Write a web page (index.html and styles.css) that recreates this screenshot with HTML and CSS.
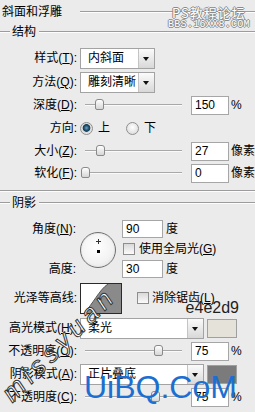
FILE: index.html
```html
<!DOCTYPE html>
<html lang="zh">
<head>
  <meta charset="UTF-8">
  <title>斜面和浮雕</title>
  <link rel="stylesheet" href="styles.css">
</head>
<body>
  <div class="panel">
    <div class="title"><span>斜面和浮雕</span><i class="rule"></i></div>
    <div class="legend"><i class="rule short"></i><span>结构</span><i class="rule"></i></div>

    <div class="row sel-row">
      <label class="lbl">样式(<u>T</u>):</label>
      <div class="select w75"><span>内斜面</span><b class="btn"></b></div>
    </div>
    <div class="row sel-row">
      <label class="lbl">方法(<u>Q</u>):</label>
      <div class="select w75"><span>雕刻清晰</span><b class="btn"></b></div>
    </div>
    <div class="row slide-row">
      <label class="lbl">深度(<u>D</u>):</label>
      <div class="slider"><div class="track"><i class="thumb" style="left:14.5%"></i></div></div>
      <div class="num">150</div><span class="unit">%</span>
    </div>
    <div class="row dir-row">
      <label class="lbl">方向:</label>
      <span class="radio on"></span><span class="opt">上</span>
      <span class="radio gap"></span><span class="opt">下</span>
    </div>
    <div class="row slide-row">
      <label class="lbl">大小(<u>Z</u>):</label>
      <div class="slider"><div class="track"><i class="thumb" style="left:15.5%"></i></div></div>
      <div class="num">27</div><span class="unit">像素</span>
    </div>
    <div class="row slide-row">
      <label class="lbl">软化(<u>F</u>):</label>
      <div class="slider"><div class="track"><i class="thumb" style="left:0%"></i></div></div>
      <div class="num">0</div><span class="unit">像素</span>
    </div>

    <i class="rule sep"></i>
    <div class="legend shadow"><i class="rule short"></i><span>阴影</span><i class="rule"></i></div>

    <div class="angle">
      <label class="lbl a-lbl">角度(<u>N</u>):</label>
      <div class="dial"><i class="cross"></i><i class="dot"></i></div>
      <div class="cell"><div class="num wide">90</div><span class="unit">度</span></div>
      <div class="cell chk-cell"><span class="check"></span><span class="opt">使用全局光(<u>G</u>)</span></div>
      <label class="lbl h-lbl">高度:</label>
      <div class="cell"><div class="num wide">30</div><span class="unit">度</span></div>
    </div>

    <div class="row contour-row">
      <label class="lbl">光泽等高线:</label>
      <div class="contour">
        <svg width="40" height="29" viewBox="0 0 40 29">
          <path d="M3 29 C 12 20, 18 6, 27 0 L 40 0 L 40 29 Z" fill="#8a8a8a"/>
          <path d="M3 29 C 12 20, 18 6, 27 0" fill="none" stroke="#555" stroke-width="1"/>
        </svg>
      </div>
      <span class="check aa"></span><span class="opt">消除锯齿(<u>L</u>)</span>
      <span class="hex">e4e2d9</span>
    </div>
    <div class="row sel-row">
      <label class="lbl">高光模式(<u>H</u>):</label>
      <div class="select w124"><span>柔光</span><b class="btn"></b></div>
      <div class="swatch light"></div>
    </div>
    <div class="row slide-row">
      <label class="lbl">不透明度(<u>O</u>):</label>
      <div class="slider"><div class="track"><i class="thumb" style="left:75%"></i></div></div>
      <div class="num">75</div><span class="unit">%</span>
    </div>
    <div class="row sel-row">
      <label class="lbl">阴影模式(<u>A</u>):</label>
      <div class="select w124"><span>正片叠底</span><b class="btn"></b></div>
      <div class="swatch dark"></div>
    </div>
    <div class="row slide-row">
      <label class="lbl">不透明度(<u>C</u>):</label>
      <div class="slider"><div class="track"><i class="thumb" style="left:72%"></i></div></div>
      <div class="num">75</div><span class="unit">%</span>
    </div>
  </div>

  <div class="wm-ps"><span class="cn">PS教程论坛</span><span class="en">BBS.16XX8.COM</span></div>
  <div class="wm-miss">missyuan</div>
  <div class="wm-uibq">UiBQ.CoM</div>
</body>
</html>
```

FILE: styles.css
```css
body {
  margin: 0;
  width: 255px;
  height: 412px;
  overflow: hidden;
  position: relative;
  background: #ebebeb;
  color: #000;
  font-family: "Liberation Sans", "Noto Sans CJK SC", sans-serif;
  font-size: 12px;
  line-height: 1;
}
u {
  text-decoration: underline;
  text-underline-offset: 1px;
}
.rule {
  display: block;
  flex: 1;
  height: 0;
  border-top: 1px solid #9c9c9c;
  border-bottom: 1px solid #fdfdfd;
}
.rule.short {
  flex: none;
  width: 10px;
}
.title {
  display: flex;
  align-items: center;
  height: 24px;
  padding-left: 2px;
}
.title .rule {
  margin-left: 18px;
}
.legend {
  display: flex;
  align-items: center;
  height: 16px;
  margin-bottom: 6px;
}
.legend span {
  padding: 0 3px 0 2px;
}
.legend.shadow {
  height: 22px;
  margin-bottom: 4px;
}
.sep {
  margin-top: 6px;
}

.row {
  display: flex;
  align-items: center;
  white-space: nowrap;
}
.sel-row { height: 24px; }
.slide-row { height: 22px; }
.dir-row { height: 24px; }
.contour-row {
  position: relative;
  height: 36px;
}

.lbl {
  width: 77px;
  flex: none;
  text-align: right;
  margin-right: 3px;
  white-space: nowrap;
}

.select {
  display: flex;
  flex: none;
  height: 21px;
  box-sizing: border-box;
  border: 1px solid #a3a3a3;
  background: #fff;
}
.select span {
  flex: 1;
  padding-left: 7px;
  line-height: 19px;
  white-space: nowrap;
  overflow: hidden;
}
.select .btn {
  position: relative;
  width: 15px;
  border-left: 1px solid #c4c4c4;
  background: linear-gradient(#fbfbfb, #d8d8d8);
}
.select .btn::after {
  content: "";
  position: absolute;
  left: 4px;
  top: 8px;
  border-top: 4px solid #111;
  border-left: 3.5px solid transparent;
  border-right: 3.5px solid transparent;
}
.w75 { width: 75px; }
.w124 { width: 124px; }

.slider {
  width: 106px;
  flex: none;
  height: 12px;
}
.track {
  position: relative;
  margin: 0 4px 0 5px;
  top: 5px;
  height: 0;
  border-top: 1px solid #a8a8a8;
  border-bottom: 1px solid #fafafa;
}
.thumb {
  position: absolute;
  top: -6px;
  margin-left: -4px;
  width: 7px;
  height: 9px;
  border: 1px solid #8a8a8a;
  border-radius: 3px 3px 2px 2px;
  background: linear-gradient(#ffffff, #d6d6d6);
}

.num {
  width: 38px;
  height: 19px;
  flex: none;
  box-sizing: border-box;
  margin-left: 5px;
  padding-left: 3px;
  border: 1px solid #a6a6a6;
  background: #fff;
  line-height: 17px;
}
.num.wide {
  width: 41px;
  height: 18px;
  margin-left: 0;
  line-height: 16px;
}
.unit {
  flex: none;
  margin-left: 2px;
  white-space: nowrap;
}
.cell .unit {
  margin-left: 3px;
}
.opt {
  flex: none;
  margin-left: 5px;
  white-space: nowrap;
}

.radio {
  width: 11px;
  height: 11px;
  flex: none;
  border-radius: 50%;
  border: 1px solid #8f8f8f;
  background: radial-gradient(circle at 50% 40%, #fff, #d4d4d4);
}
.radio.on {
  background: radial-gradient(circle at 50% 45%, #6fa3c2 0, #1d4e6a 2.5px, #163f57 3.5px, #dcdcdc 4.2px, #f3f3f3);
}
.radio.gap {
  margin-left: 16px;
}

.check {
  width: 10px;
  height: 10px;
  flex: none;
  border: 1px solid #8e8e8e;
  background: linear-gradient(#d9d9d9, #fbfbfb);
}

.angle {
  display: grid;
  grid-template-columns: 80px 42px auto;
  grid-template-rows: 22px 18px 22px;
  align-items: center;
}
.angle .lbl {
  width: auto;
  margin-right: 4px;
}
.a-lbl { grid-column: 1; grid-row: 1; }
.h-lbl { grid-column: 1; grid-row: 3; }
.dial {
  grid-column: 2;
  grid-row: 1 / 4;
  position: relative;
  width: 34px;
  height: 34px;
  margin-top: 2px;
  border-radius: 50%;
  border: 1px solid #6f6f6f;
  background: radial-gradient(circle at 45% 40%, #ffffff, #f2f2f2 60%, #d9d9d9);
  box-shadow: inset 0 0 0 1px #e8e8e8;
}
.dial .cross {
  position: absolute;
  left: 15px;
  top: 6px;
  width: 5px;
  height: 5px;
  background: linear-gradient(#333, #333) center / 5px 1px no-repeat,
              linear-gradient(#333, #333) center / 1px 5px no-repeat;
}
.dial .dot {
  position: absolute;
  left: 16px;
  top: 17px;
  width: 3px;
  height: 3px;
  background: #000;
}
.cell {
  grid-column: 3;
  display: flex;
  align-items: center;
  white-space: nowrap;
}
.chk-cell {
  grid-row: 2;
  padding-left: 1px;
}
.chk-cell .opt {
  margin-left: 4px;
}

.contour {
  width: 40px;
  height: 29px;
  flex: none;
  border: 1px solid #2a2a2a;
  background: #fff;
}
.contour svg {
  display: block;
}
.check.aa {
  margin-left: 15px;
}
.contour-row .opt {
  margin-left: 3px;
}
.hex {
  position: absolute;
  right: 16px;
  bottom: 0;
  font-size: 16px;
  line-height: 16px;
  color: #1e1e1e;
}

.swatch {
  width: 30px;
  height: 19px;
  flex: none;
  margin-left: 3px;
  box-sizing: border-box;
  border: 1px solid #a0a0a0;
}
.swatch.light { background: #e4e2d9; }
.swatch.dark { background: #7b7b7b; }

.wm-ps {
  position: absolute;
  left: 168px;
  top: 6px;
  display: flex;
  flex-direction: column;
  align-items: center;
  color: #fff;
  text-shadow: 1px 0 #8a8a8a, -1px 0 #8a8a8a, 0 1px #8a8a8a, 0 -1px #8a8a8a;
}
.wm-ps .cn {
  font-family: "Noto Sans CJK SC", sans-serif;
  font-size: 13px;
  line-height: 13px;
  letter-spacing: 1px;
}
.wm-ps .en {
  font-family: "Liberation Mono", monospace;
  font-size: 10px;
  line-height: 10px;
  letter-spacing: 0.3px;
  margin-top: 1px;
}
.wm-miss {
  position: absolute;
  left: 6px;
  top: 384px;
  transform-origin: 0 50%;
  transform: rotate(-45deg);
  font-family: "Liberation Sans", sans-serif;
  font-style: italic;
  font-size: 26px;
  letter-spacing: 5px;
  color: #fff;
  -webkit-text-stroke: 1px #333;
  white-space: nowrap;
}
.wm-uibq {
  position: absolute;
  left: 84px;
  top: 371px;
  font-family: "Liberation Sans", sans-serif;
  font-size: 32px;
  line-height: 32px;
  color: #1b6fd2;
  white-space: nowrap;
}
```
